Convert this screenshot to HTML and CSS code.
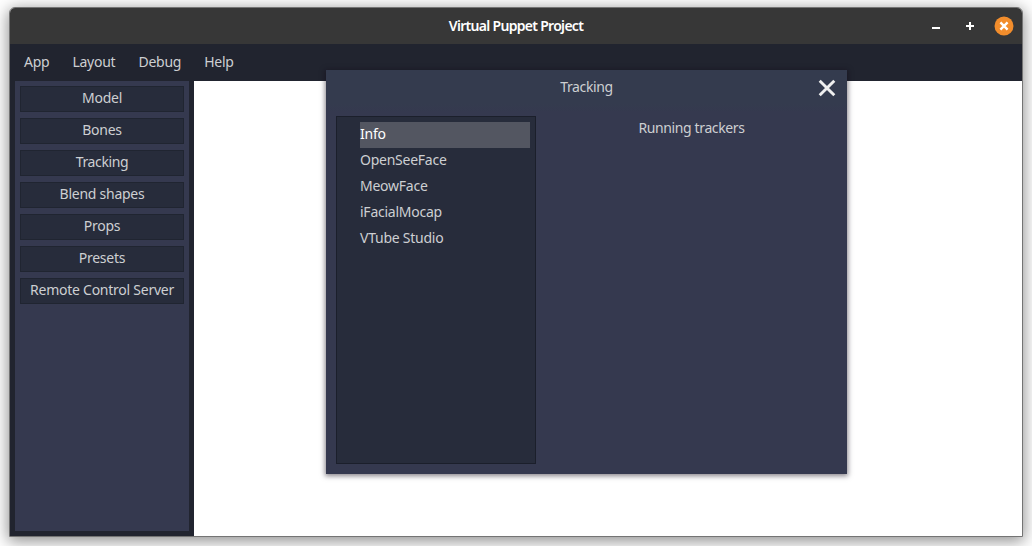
FILE: index.html
```html
<!DOCTYPE html>
<html lang="en">
<head>
<meta charset="utf-8">
<title>Virtual Puppet Project</title>
<link rel="stylesheet" href="styles.css">
</head>
<body>
<div class="window">
  <header class="titlebar">
    <h1 class="title">Virtual Puppet Project</h1>
    <div class="controls">
      <svg width="18" height="18" viewBox="0 0 18 18"><path d="M5 11h8" stroke="#fff" stroke-width="2"/></svg>
      <svg width="18" height="18" viewBox="0 0 18 18"><path d="M5 9h8M9 5v8" stroke="#fff" stroke-width="2"/></svg>
      <svg class="quit" width="20" height="20" viewBox="0 0 20 20"><circle cx="10" cy="10" r="9.5" fill="#f28d2c"/><path d="M6.4 6.4l7.2 7.2M13.6 6.4l-7.2 7.2" stroke="#fff" stroke-width="2.4"/></svg>
    </div>
  </header>
  <nav class="menu">
    <span>App</span><span>Layout</span><span>Debug</span><span>Help</span>
  </nav>
  <main class="body">
    <aside class="rail">
      <div class="panel">
        <button class="btn">Model</button>
        <button class="btn">Bones</button>
        <button class="btn tight">Tracking</button>
        <button class="btn">Blend shapes</button>
        <button class="btn">Props</button>
        <button class="btn">Presets</button>
        <button class="btn">Remote Control Server</button>
      </div>
    </aside>
    <div class="viewport"></div>
  </main>
</div>
<section class="dialog">
  <div class="dialog-head">
    <span class="tight">Tracking</span>
    <svg class="close" width="18" height="18" viewBox="0 0 18 18"><path d="M1.7 1.7l14.6 14.6M16.3 1.7L1.7 16.3" stroke="#efefef" stroke-width="2.9"/></svg>
  </div>
  <div class="dialog-body">
    <ul class="list">
      <li class="item selected">Info</li>
      <li class="item">OpenSeeFace</li>
      <li class="item">MeowFace</li>
      <li class="item">iFacialMocap</li>
      <li class="item">VTube Studio</li>
    </ul>
    <div class="content tight">Running trackers</div>
  </div>
</section>
</body>
</html>
```
FILE: styles.css
```css
* { box-sizing: border-box; }
body {
  margin: 0;
  width: 1032px;
  height: 546px;
  padding: 7px 9px 9px;
  overflow: hidden;
  background: #fff;
  font: 14px/20px "Noto Sans", "Open Sans", sans-serif;
  letter-spacing: -.25px;
  color: #cdcfd2;
}
.window {
  display: flex;
  flex-direction: column;
  width: 1014px;
  height: 530px;
  border: 1px solid #747474;
  border-radius: 6px 6px 0 0;
  overflow: hidden;
  background: #fff;
  box-shadow: 0 3px 16px 1px rgba(0, 0, 0, .45);
}
.titlebar {
  display: grid;
  grid-template-columns: 1fr auto 1fr;
  align-items: center;
  height: 36px;
  flex: none;
  background: #373737;
}
.title {
  grid-column: 2;
  margin: 0;
  font: 600 14px/20px "Noto Sans", sans-serif;
  letter-spacing: -.7px;
  color: #fff;
}
.controls {
  display: flex;
  align-items: center;
  justify-self: end;
  gap: 16px;
  padding-right: 8px;
}
.controls svg, .close { display: block; }
.controls .quit { margin-left: -1px; }
.menu {
  display: flex;
  gap: 23px;
  height: 37px;
  flex: none;
  padding: 8px 14px;
  background: #21242f;
}
.body { display: flex; flex: 1; min-height: 0; }
.rail { width: 184px; padding: 0 5px 5px; background: #21242f; }
.panel {
  display: flex;
  flex-direction: column;
  gap: 6px;
  height: 100%;
  padding: 5px;
  background: #35394f;
}
.btn {
  height: 26px;
  flex: none;
  padding: 0 0 2px;
  border: 1px solid #202531;
  background: #272c3b;
  color: inherit;
  font: inherit;
  letter-spacing: -.25px;
  line-height: 22px;
  white-space: nowrap;
}
.tight { letter-spacing: -.38px; }
.viewport { flex: 1; background: #fff; }
.dialog {
  position: absolute;
  left: 326px;
  top: 70px;
  width: 521px;
  height: 404px;
  padding: 0 10px 10px;
  background: linear-gradient(#343b4e 0, #343b4e 34px, #35394f 42px);
  box-shadow: 0 1px 5px 1px rgba(18, 10, 24, .5);
}
.dialog-head {
  display: grid;
  grid-template-columns: 1fr auto 1fr;
  height: 46px;
  padding-top: 7px;
}
.dialog-head span { grid-column: 2; }
.close { justify-self: end; margin: 2px 1px 0 0; }
.dialog-body { display: flex; height: 348px; }
.list {
  width: 200px;
  margin: 0;
  padding: 5px 5px 5px 23px;
  border: 1px solid #1b1f2b;
  background: #272c3b;
  list-style: none;
}
.item { height: 26px; line-height: 24px; }
.selected { background: #535661; color: #fff; }
.content { flex: 1; padding: 2px 0 0 10px; text-align: center; }
```
